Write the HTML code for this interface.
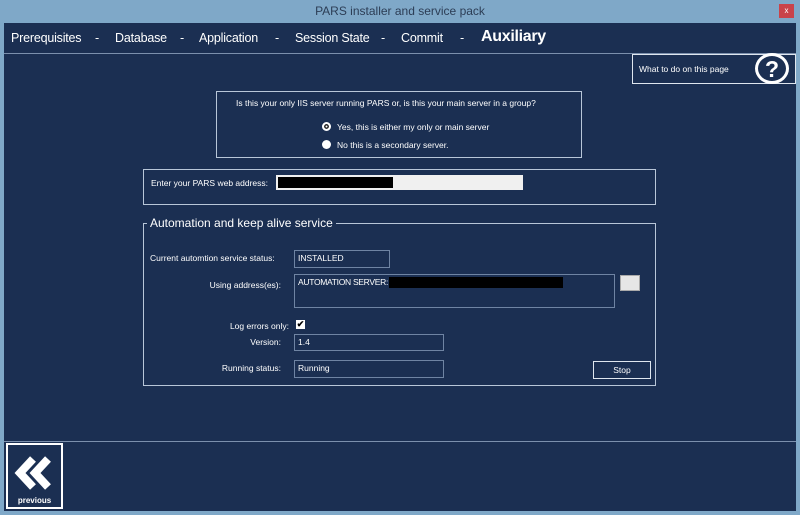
<!DOCTYPE html>
<html><head><style>
*{margin:0;padding:0;box-sizing:border-box}
body{width:800px;height:515px;background:#7fa8c8;font-family:"Liberation Sans",sans-serif;position:relative;overflow:hidden;color:#fff}
.a{position:absolute}
.t{font-size:8.5px;color:#fff;white-space:nowrap}
.box{position:absolute;border:1px solid #b8c6d8}
.fld{position:absolute;border:1px solid #6f84a3;font-size:8.5px;padding:2px 3px;color:#fff;white-space:nowrap}
.n{position:absolute;top:31px;font-size:12.5px;white-space:nowrap;letter-spacing:-0.2px}
</style></head><body>
<div class="a" style="left:0;top:4px;width:800px;text-align:center;font-size:12px;color:#2c3d55">PARS installer and service pack</div>
<div class="a" style="left:779px;top:4px;width:15px;height:14px;background:#c9434a;color:#fff;font-size:8px;text-align:center;line-height:14px">x</div>
<div class="a" style="left:4px;top:23px;width:792px;height:488px;background:#1b2f52"></div>
<div class="a" style="left:4px;top:53px;width:792px;height:1px;background:#7c90ad"></div>
<div class="a" style="left:4px;top:441px;width:792px;height:1px;background:#7c90ad"></div>
<div class="n" style="left:11px">Prerequisites</div>
<div class="n" style="left:95px">-</div>
<div class="n" style="left:115px">Database</div>
<div class="n" style="left:180px">-</div>
<div class="n" style="left:199px">Application</div>
<div class="n" style="left:275px">-</div>
<div class="n" style="left:295px">Session State</div>
<div class="n" style="left:381px">-</div>
<div class="n" style="left:401px">Commit</div>
<div class="n" style="left:460px">-</div>
<div class="n" style="left:481px;top:28px;font-size:16px;font-weight:bold;letter-spacing:-0.3px">Auxiliary</div>
<div class="box" style="left:632px;top:54px;width:164px;height:30px;border-color:#dfe6ef"></div>
<div class="a t" style="left:639px;top:64px">What to do on this page</div>
<div class="a" style="left:755px;top:53px;width:34px;height:31px;border:3px solid #fff;border-radius:50%;font-weight:bold;font-size:23px;text-align:center;line-height:26px">?</div>

<div class="box" style="left:216px;top:91px;width:366px;height:67px"></div>
<div class="a t" style="left:236px;top:98px">Is this your only IIS server running PARS or, is this your main server in a group?</div>
<div class="a" style="left:322px;top:122px;width:9px;height:9px;border-radius:50%;background:#fff;border:2.5px solid #fff;box-shadow:inset 0 0 0 1.5px #222"></div>
<div class="a t" style="left:337px;top:122px">Yes, this is either my only or main server</div>
<div class="a" style="left:322px;top:140px;width:9px;height:9px;border-radius:50%;background:#fff"></div>
<div class="a t" style="left:337px;top:140px">No this is a secondary server.</div>

<div class="box" style="left:143px;top:169px;width:513px;height:36px"></div>
<div class="a t" style="left:151px;top:178px">Enter your PARS web address:</div>
<div class="a" style="left:276px;top:175px;width:247px;height:15px;background:#f0f0f0"></div>
<div class="a" style="left:278px;top:177px;width:115px;height:11px;background:#000"></div>

<div class="box" style="left:143px;top:223px;width:513px;height:163px"></div>
<div class="a" style="left:147px;top:216px;padding:0 3px;background:#1b2f52;font-size:12px;white-space:nowrap">Automation and keep alive service</div>
<div class="a t" style="left:150px;top:253px">Current automtion service status:</div>
<div class="fld" style="left:294px;top:250px;width:96px;height:18px">INSTALLED</div>
<div class="a t" style="left:150px;top:280px;width:131px;text-align:right">Using address(es):</div>
<div class="fld" style="left:294px;top:274px;width:321px;height:34px;letter-spacing:-0.3px">AUTOMATION SERVER:</div>
<div class="a" style="left:389px;top:277px;width:174px;height:11px;background:#000"></div>
<div class="a" style="left:620px;top:275px;width:20px;height:16px;background:#e6e6e6;border:1px solid #aaa"></div>
<div class="a t" style="left:150px;top:321px;width:139px;text-align:right">Log errors only:</div>
<div class="a" style="left:296px;top:320px;width:9px;height:9px;background:#fff;color:#000;font-size:9px;line-height:9px;text-align:center;font-weight:bold">✔</div>
<div class="a t" style="left:150px;top:337px;width:131px;text-align:right">Version:</div>
<div class="fld" style="left:294px;top:334px;width:150px;height:17px">1.4</div>
<div class="a t" style="left:150px;top:363px;width:131px;text-align:right">Running status:</div>
<div class="fld" style="left:294px;top:360px;width:150px;height:18px">Running</div>
<div class="a t" style="left:593px;top:361px;width:58px;height:18px;border:1px solid #dfe6ef;text-align:center;line-height:16px">Stop</div>

<div class="a" style="left:6px;top:443px;width:57px;height:66px;border:2px solid #fff"></div>
<svg class="a" style="left:14px;top:455px" width="40" height="40" viewBox="0 0 40 40"><path d="M19 4 L6 18 L19 32 M34 4 L21 18 L34 32" fill="none" stroke="#fff" stroke-width="8" stroke-linejoin="miter"/></svg>
<div class="a" style="left:6px;top:496px;width:57px;text-align:center;font-size:8px;font-weight:bold">previous</div>
</body></html>
